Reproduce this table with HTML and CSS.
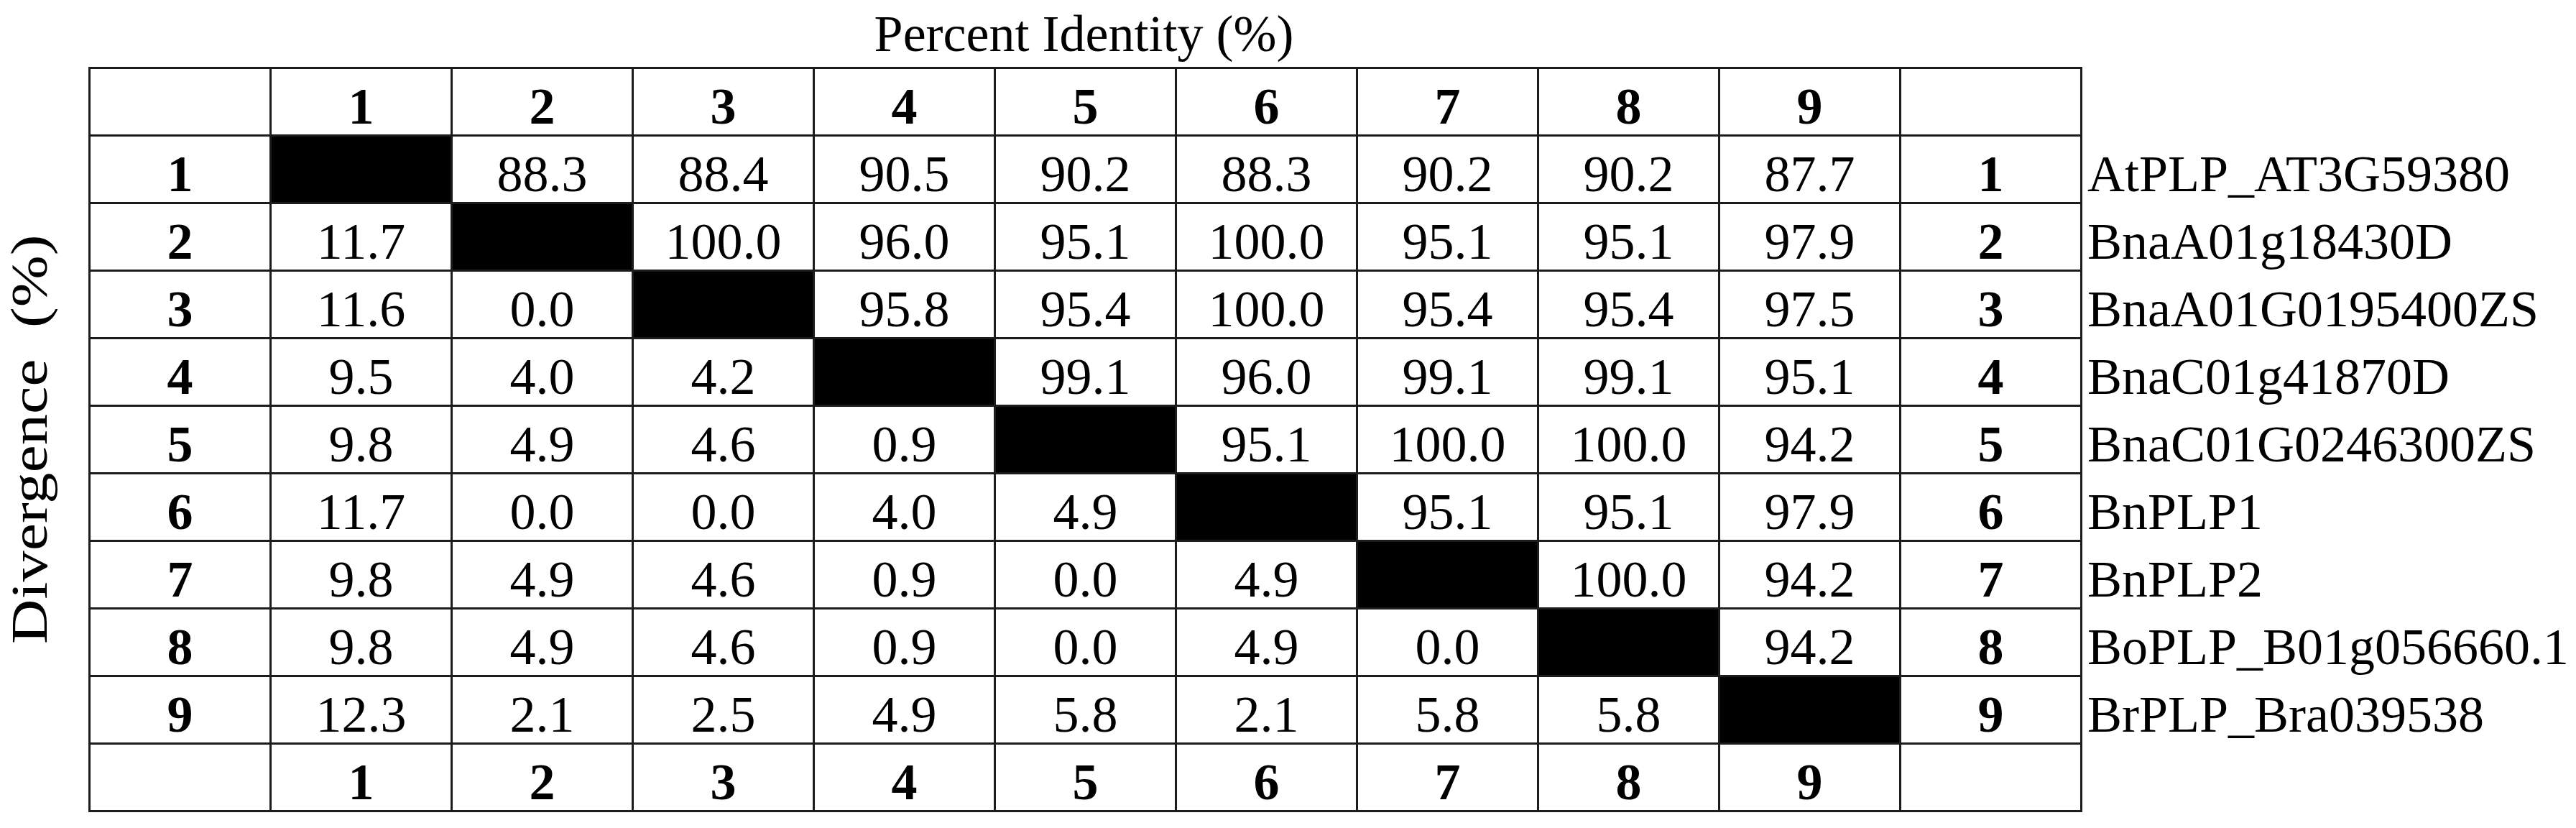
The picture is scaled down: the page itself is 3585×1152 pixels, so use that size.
FILE: index.html
```html
<!DOCTYPE html>
<html>
<head>
	<meta charset="UTF-8">
	<title>Percent Identity and Divergence</title>
	<link rel="stylesheet" href="styles.css">
</head>
<body>

<div class="figure">
	<div class="title">Percent Identity (%)</div>

	<div class="y-label">Divergence&nbsp; (%)</div>

	<table class="matrix">
		<tr>
			<td></td>
			<td class="hd">1</td><td class="hd">2</td><td class="hd">3</td><td class="hd">4</td><td class="hd">5</td><td class="hd">6</td><td class="hd">7</td><td class="hd">8</td><td class="hd">9</td>
			<td></td>
			<td class="name"></td>
		</tr>
		<tr>
			<td class="hd">1</td>
			<td class="self"></td><td>88.3</td><td>88.4</td><td>90.5</td><td>90.2</td><td>88.3</td><td>90.2</td><td>90.2</td><td>87.7</td>
			<td class="hd">1</td>
			<td class="name">AtPLP_AT3G59380</td>
		</tr>
		<tr>
			<td class="hd">2</td>
			<td>11.7</td><td class="self"></td><td>100.0</td><td>96.0</td><td>95.1</td><td>100.0</td><td>95.1</td><td>95.1</td><td>97.9</td>
			<td class="hd">2</td>
			<td class="name">BnaA01g18430D</td>
		</tr>
		<tr>
			<td class="hd">3</td>
			<td>11.6</td><td>0.0</td><td class="self"></td><td>95.8</td><td>95.4</td><td>100.0</td><td>95.4</td><td>95.4</td><td>97.5</td>
			<td class="hd">3</td>
			<td class="name">BnaA01G0195400ZS</td>
		</tr>
		<tr>
			<td class="hd">4</td>
			<td>9.5</td><td>4.0</td><td>4.2</td><td class="self"></td><td>99.1</td><td>96.0</td><td>99.1</td><td>99.1</td><td>95.1</td>
			<td class="hd">4</td>
			<td class="name">BnaC01g41870D</td>
		</tr>
		<tr>
			<td class="hd">5</td>
			<td>9.8</td><td>4.9</td><td>4.6</td><td>0.9</td><td class="self"></td><td>95.1</td><td>100.0</td><td>100.0</td><td>94.2</td>
			<td class="hd">5</td>
			<td class="name">BnaC01G0246300ZS</td>
		</tr>
		<tr>
			<td class="hd">6</td>
			<td>11.7</td><td>0.0</td><td>0.0</td><td>4.0</td><td>4.9</td><td class="self"></td><td>95.1</td><td>95.1</td><td>97.9</td>
			<td class="hd">6</td>
			<td class="name">BnPLP1</td>
		</tr>
		<tr>
			<td class="hd">7</td>
			<td>9.8</td><td>4.9</td><td>4.6</td><td>0.9</td><td>0.0</td><td>4.9</td><td class="self"></td><td>100.0</td><td>94.2</td>
			<td class="hd">7</td>
			<td class="name">BnPLP2</td>
		</tr>
		<tr>
			<td class="hd">8</td>
			<td>9.8</td><td>4.9</td><td>4.6</td><td>0.9</td><td>0.0</td><td>4.9</td><td>0.0</td><td class="self"></td><td>94.2</td>
			<td class="hd">8</td>
			<td class="name">BoPLP_B01g056660.1</td>
		</tr>
		<tr>
			<td class="hd">9</td>
			<td>12.3</td><td>2.1</td><td>2.5</td><td>4.9</td><td>5.8</td><td>2.1</td><td>5.8</td><td>5.8</td><td class="self"></td>
			<td class="hd">9</td>
			<td class="name">BrPLP_Bra039538</td>
		</tr>
		<tr>
			<td></td>
			<td class="hd">1</td><td class="hd">2</td><td class="hd">3</td><td class="hd">4</td><td class="hd">5</td><td class="hd">6</td><td class="hd">7</td><td class="hd">8</td><td class="hd">9</td>
			<td></td>
			<td class="name"></td>
		</tr>
	</table>
</div>

</body>
</html>
```

FILE: styles.css
```css
body{
	margin: 0;
	background-color: #fff;
	color: #000;
	font-family: "Liberation Serif", "Times New Roman", serif;
	font-size: 72px;
}

.figure{
	display: grid;
	grid-template-columns: 123px auto;
	grid-template-rows: 93px auto;
}

.title{
	grid-column: 2;
	grid-row: 1;
	width: 2771px;
	text-align: center;
	align-self: end;
	line-height: 1;
	padding-bottom: 10px;
}

.y-label{
	grid-column: 1;
	grid-row: 2;
	align-self: center;
	justify-self: start;
	writing-mode: vertical-rl;
	transform: rotate(180deg) scaleY(1.2);
	white-space: nowrap;
}

.matrix{
	grid-column: 2;
	grid-row: 2;
	border-collapse: collapse;
}

.matrix td{
	width: 249px;
	height: 79px;
	padding: 12px 0 0 0;
	border: 3px solid #1c1c1c;
	text-align: center;
	vertical-align: middle;
	line-height: 1;
}

.matrix td.hd{
	font-weight: bold;
}

.matrix td.self{
	background-color: #000;
}

.matrix td.name{
	width: auto;
	border: none;
	text-align: left;
	padding-left: 7px;
	white-space: nowrap;
}
```
